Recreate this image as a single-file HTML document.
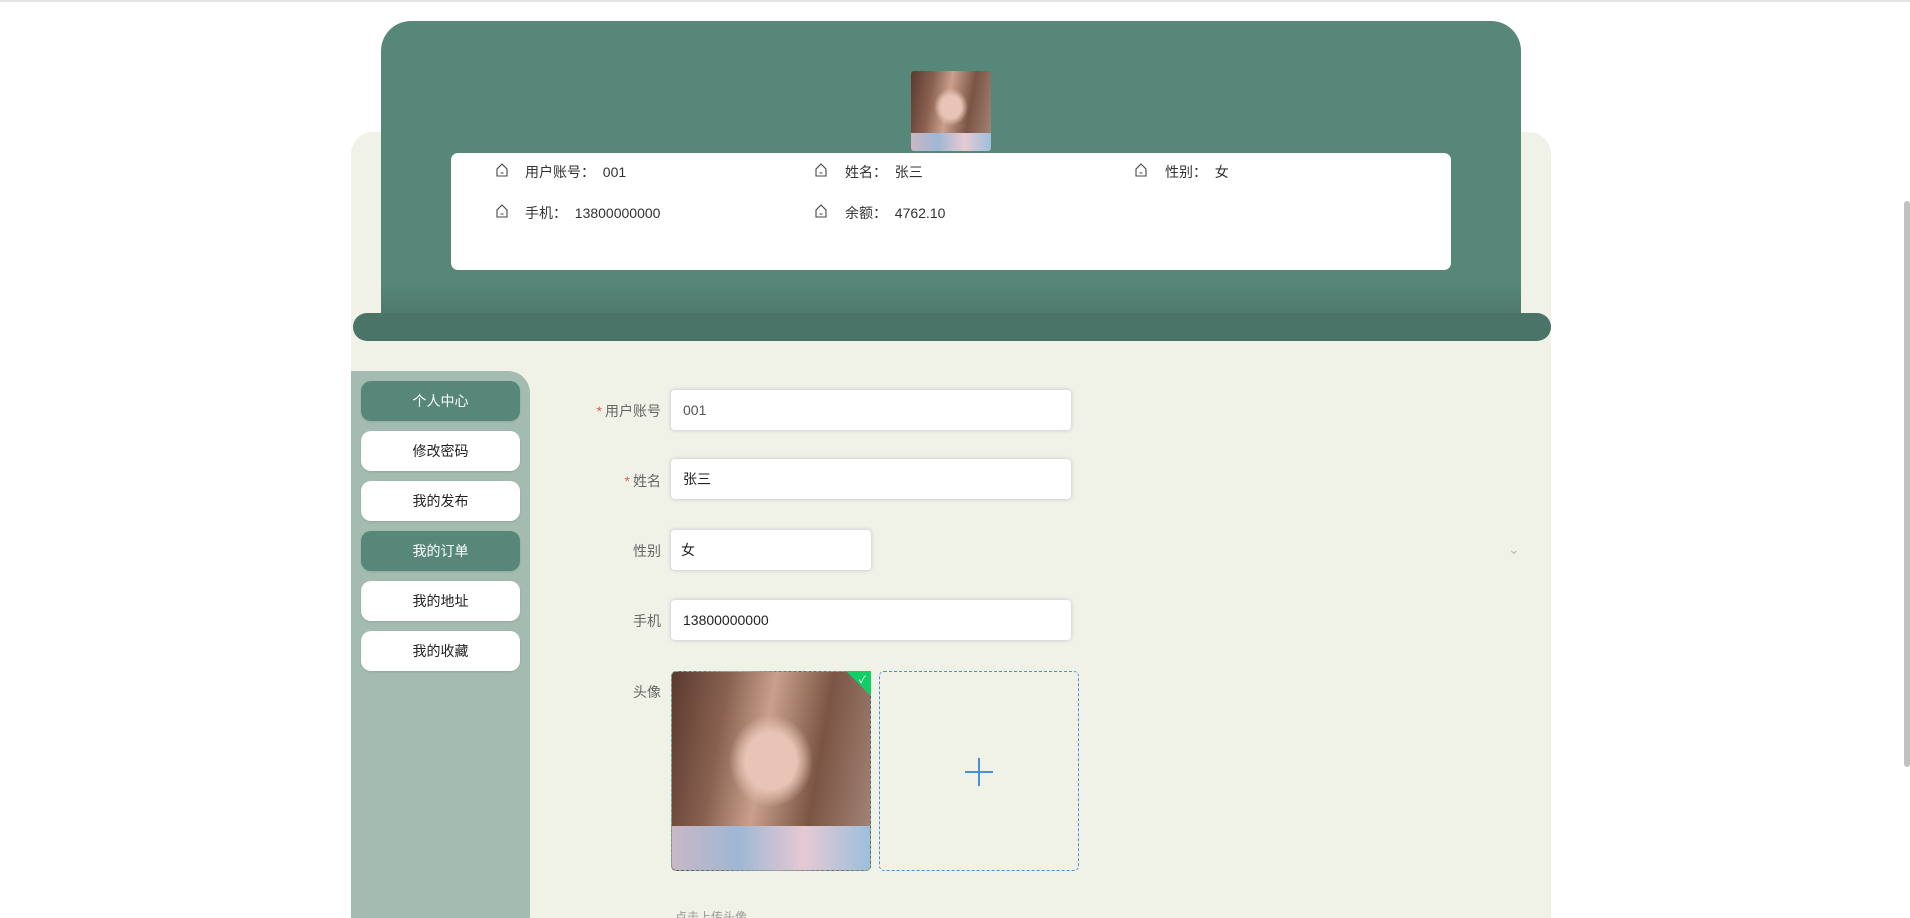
<!DOCTYPE html>
<html style="overflow:hidden;width:1910px;height:918px"><head><meta charset="utf-8"><style>
*{box-sizing:border-box;margin:0;padding:0}
body{width:1910px;height:918px;overflow:hidden;background:#fff;font-family:"Liberation Sans","Noto Sans CJK SC",sans-serif;position:relative}
.abs{position:absolute}
.photo{background:radial-gradient(ellipse at 50% 45%,#e9c4b6 0 18%,transparent 30%),linear-gradient(100deg,#5a3a2e 0%,#8a6151 25%,#c9a08c 45%,#7b5444 70%,#a6887a 100%);}
.photo::after{content:"";position:absolute;left:0;right:0;bottom:0;height:22%;background:linear-gradient(90deg,#c9b7c6,#9fb7d4,#e6c9d3,#9cc0dc)}
.info{font-size:14px;color:#333}
.btn{position:absolute;left:361px;width:159px;height:40px;border-radius:10px;background:#fff;font-size:14px;color:#222;text-align:center;line-height:40px;box-shadow:0 1px 2px rgba(0,0,0,.1)}
.btn.on{background:#568779;color:#fff}
.lbl{position:absolute;width:150px;left:511px;text-align:right;font-size:14px;color:#666;}
.lbl i{color:#e05a5a;font-style:normal;margin-right:3px}
.inp{position:absolute;left:671px;height:40px;background:#fff;border-radius:4px;box-shadow:0 0 4px rgba(120,140,170,.45);font-size:14px;color:#222;padding-left:12px;line-height:40px}
</style></head><body>
<div class="abs" style="left:0;top:0;width:1910px;height:2px;background:#e4e4e4"></div>
<div class="abs" style="left:351px;top:132px;width:1200px;height:786px;background:#f1f2e7;border-radius:22px 22px 0 0"></div>
<div class="abs" style="left:381px;top:21px;width:1140px;height:305px;background:linear-gradient(#568779 0,#568779 85%,#4c7568 100%);border-radius:30px 30px 0 0"></div>
<div class="abs" style="left:353px;top:313px;width:1198px;height:28px;background:#4a7468;border-radius:14px"></div>
<div class="abs photo" style="left:911px;top:71px;width:80px;height:80px;border-radius:3px;overflow:hidden"></div>
<div class="abs" style="left:451px;top:153px;width:1000px;height:117px;background:#fff;border-radius:7px"></div>
<svg class="abs" style="left:0;top:0" width="1910" height="300">
<g fill="none" stroke="#444" stroke-width="1.1">
<path d="M497 176v-7l5-5 5 5v7z M500.5 173h3"/><path d="M497 217v-7l5-5 5 5v7z M500.5 214h3"/>
<path d="M816 176v-7l5-5 5 5v7z M819.5 173h3"/><path d="M816 217v-7l5-5 5 5v7z M819.5 214h3"/>
<path d="M1136 176v-7l5-5 5 5v7z M1139.5 173h3"/>
</g></svg>
<div class="abs info" style="left:525px;top:162px">用户账号：&nbsp;&nbsp;001</div>
<div class="abs info" style="left:845px;top:162px">姓名：&nbsp;&nbsp;张三</div>
<div class="abs info" style="left:1165px;top:162px">性别：&nbsp;&nbsp;女</div>
<div class="abs info" style="left:525px;top:203px">手机：&nbsp;&nbsp;13800000000</div>
<div class="abs info" style="left:845px;top:203px">余额：&nbsp;&nbsp;4762.10</div>
<div class="abs" style="left:351px;top:344px;width:1200px;height:574px;background:#f1f2e7;border-radius:22px 22px 0 0"></div>
<div class="abs" style="left:351px;top:371px;width:179px;height:547px;background:#a4bbb1;border-radius:0 22px 0 0"></div>
<div class="btn on" style="top:381px">个人中心</div>
<div class="btn" style="top:431px">修改密码</div>
<div class="btn" style="top:481px">我的发布</div>
<div class="btn on" style="top:531px">我的订单</div>
<div class="btn" style="top:581px">我的地址</div>
<div class="btn" style="top:631px">我的收藏</div>
<div class="lbl" style="top:401px"><i>*</i>用户账号</div>
<div class="inp" style="top:390px;width:400px;color:#555">001</div>
<div class="lbl" style="top:471px"><i>*</i>姓名</div>
<div class="inp" style="top:459px;width:400px">张三</div>
<div class="lbl" style="top:541px">性别</div>
<div class="inp" style="top:530px;width:200px;padding-left:10px">女</div>
<div class="abs" style="left:1508px;top:541px;color:#bbb;font-size:14px">&#8964;</div>
<div class="lbl" style="top:611px">手机</div>
<div class="inp" style="top:600px;width:400px">13800000000</div>
<div class="lbl" style="top:682px">头像</div>
<div class="abs photo" style="left:671px;top:671px;width:200px;height:200px;border-radius:5px;overflow:hidden;border:1px dashed #7aa"></div>
<div class="abs" style="left:846px;top:671px;width:0;height:0;border-top:25px solid #13ce66;border-left:25px solid transparent"></div>
<div class="abs" style="left:859px;top:671px;color:#fff;font-size:10px">✓</div>
<div class="abs" style="left:879px;top:671px;width:200px;height:200px;border:1px dashed #4a90d9;border-radius:5px"></div>
<div class="abs" style="left:965px;top:771px;width:28px;height:2px;background:#4a90d9"></div>
<div class="abs" style="left:978px;top:758px;width:2px;height:28px;background:#4a90d9"></div>
<div class="abs" style="left:675px;top:910px;height:8px;overflow:hidden;font-size:12px;line-height:14px;color:#999">点击上传头像</div>
<div class="abs" style="left:1904px;top:201px;width:6px;height:566px;background:#c1c1c1;border-radius:3px"></div>
</body></html>
